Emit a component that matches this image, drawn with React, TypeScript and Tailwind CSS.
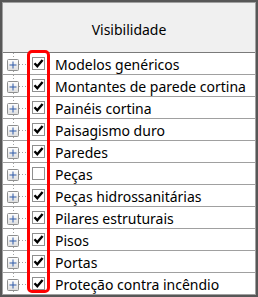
import React from 'react';

const layers = [
  { name: 'Modelos genéricos', on: true },
  { name: 'Montantes de parede cortina', on: true },
  { name: 'Painéis cortina', on: true },
  { name: 'Paisagismo duro', on: true },
  { name: 'Paredes', on: true },
  { name: 'Peças', on: false },
  { name: 'Peças hidrossanitárias', on: true },
  { name: 'Pilares estruturais', on: true },
  { name: 'Pisos', on: true },
  { name: 'Portas', on: true },
  { name: 'Proteção contra incêndio', on: true },
];

const TreeNode = () => (
  <svg width="25" height="22" viewBox="0 0 25 22" className="shrink-0">
    <line x1="10.5" y1="0" x2="10.5" y2="22" stroke="#a0a0a0" strokeDasharray="1 2" />
    <line x1="16" y1="11.5" x2="24" y2="11.5" stroke="#a0a0a0" strokeDasharray="1 2" />
    <defs>
      <linearGradient id="pbg" x1="0" y1="0" x2="0" y2="1">
        <stop offset="0" stopColor="#ffffff" />
        <stop offset="1" stopColor="#dedede" />
      </linearGradient>
    </defs>
    <rect x="4.5" y="6.5" width="11" height="11" rx="1" fill="url(#pbg)" stroke="#8e8f8f" />
    <line x1="6.5" y1="12" x2="13.5" y2="12" stroke="#2f5aa8" />
    <line x1="10" y1="8.5" x2="10" y2="15.5" stroke="#2f5aa8" />
  </svg>
);

const Check = ({ on }: { on: boolean }) => (
  <span className="ml-[4px] flex h-[13px] w-[13px] shrink-0 items-center justify-center border border-[#8f8f8f] bg-white">
    {on && (
      <svg width="11" height="11" viewBox="0 0 11 11">
        <path d="M1.5 5.3 L4.3 8.3 L9.6 2" fill="none" stroke="#000" strokeWidth="2.4" />
      </svg>
    )}
  </span>
);

export default function App() {
  return (
    <div
      className="relative flex h-[297px] w-[258px] flex-col overflow-hidden border-2 border-[#575757] bg-white text-[14px] text-black"
      style={{ fontFamily: '"Noto Sans", "Segoe UI", sans-serif' }}
    >
      <div className="flex flex-1 flex-col overflow-hidden border border-b-0 border-[#a0a0a0]">
        <div className="flex h-[50px] shrink-0 items-center justify-center border-b border-[#7a7a7a] bg-[#f0f0f0] pt-[3px]">
          Visibilidade
        </div>
        {layers.map((layer) => (
          <div key={layer.name} className="flex h-[22px] shrink-0 items-center border-b border-[#a0a0a0]">
            <TreeNode />
            <Check on={layer.on} />
            <span className="ml-[10px] whitespace-nowrap pt-[2px] leading-none">{layer.name}</span>
          </div>
        ))}
      </div>
      <div className="pointer-events-none absolute left-[25px] top-[48px] h-[243px] w-[23px] rounded-[5px] border-[3px] border-[#ff0000]" />
    </div>
  );
}
